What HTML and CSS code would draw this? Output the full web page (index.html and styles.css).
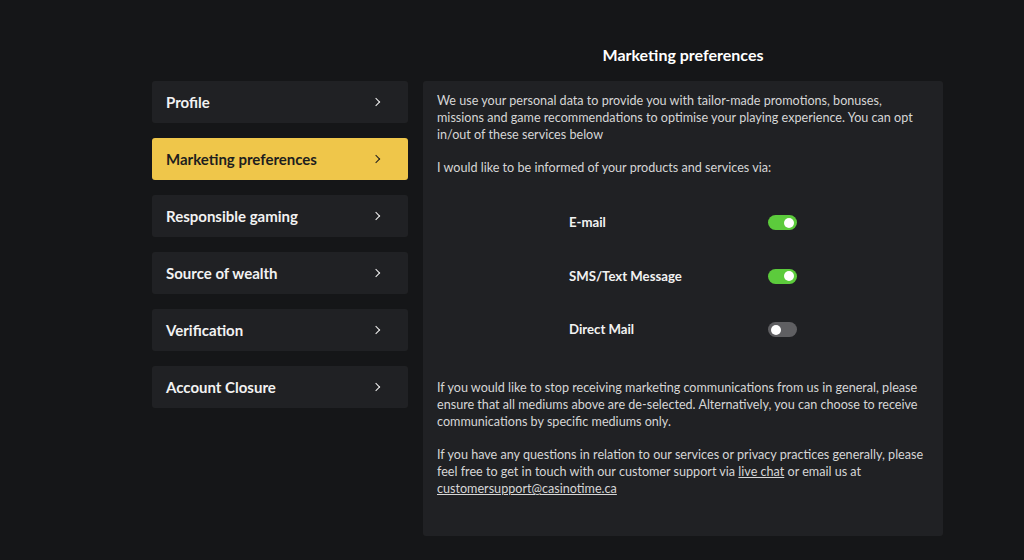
FILE: index.html
```html
<!DOCTYPE html>
<html lang="en">
<head>
    <meta charset="UTF-8">
    <meta name="viewport" content="width=device-width, initial-scale=1.0">
    <title>Account - Marketing preferences</title>
    <link rel="stylesheet" href="styles.css">
</head>
<body>

    <div class="page">
        <nav class="sidebar">
            <a class="menu-item" href="#">Profile <span class="chevron"></span></a>
            <a class="menu-item active" href="#">Marketing preferences <span class="chevron"></span></a>
            <a class="menu-item" href="#">Responsible gaming <span class="chevron"></span></a>
            <a class="menu-item" href="#">Source of wealth <span class="chevron"></span></a>
            <a class="menu-item" href="#">Verification <span class="chevron"></span></a>
            <a class="menu-item" href="#">Account Closure <span class="chevron"></span></a>
        </nav>

        <main class="content">
            <h1>Marketing preferences</h1>

            <div class="panel">
                <p>We use your personal data to provide you with tailor-made promotions, bonuses, missions and game recommendations to optimise your playing experience. You can opt in/out of these services below</p>
                <p>I would like to be informed of your products and services via:</p>

                <div class="options">
                    <label class="option">
                        <span>E-mail</span>
                        <input type="checkbox" checked>
                        <span class="switch"></span>
                    </label>
                    <label class="option">
                        <span>SMS/Text Message</span>
                        <input type="checkbox" checked>
                        <span class="switch"></span>
                    </label>
                    <label class="option">
                        <span>Direct Mail</span>
                        <input type="checkbox">
                        <span class="switch"></span>
                    </label>
                </div>

                <p>If you would like to stop receiving marketing communications from us in general, please ensure that all mediums above are de-selected. Alternatively, you can choose to receive communications by specific mediums only.</p>
                <p>If you have any questions in relation to our services or privacy practices generally, please feel free to get in touch with our customer support via <a href="#">live chat</a> or email us at <a href="#">customersupport@casinotime.ca</a></p>
            </div>
        </main>
    </div>

</body>
</html>
```

FILE: styles.css
```css
body {
    background-color: #151618;
    color: #E6E6E6;
    font-family: 'Lato', sans-serif;
    margin: 0;
    padding: 0;
}

.page {
    display: flex;
    gap: 15px;
    padding: 45px 0 0 152px;
}

/* left menu */
.sidebar {
    width: 256px;
    margin-top: 36px;
    display: flex;
    flex-direction: column;
    gap: 15px;
}

.menu-item {
    box-sizing: border-box;
    height: 42px;
    display: flex;
    align-items: center;
    justify-content: space-between;
    padding: 0 29px 1px 14px;
    background-color: #202124;
    border-radius: 3px;
    color: #F2F2F2;
    font-size: 15px;
    font-weight: bold;
    text-decoration: none;
}

.menu-item.active {
    background-color: #EFC64A;
    color: #1E1E1E;
}

.chevron {
    width: 5px;
    height: 5px;
    border-right: 1.5px solid currentColor;
    border-top: 1.5px solid currentColor;
    transform: rotate(45deg);
}

/* right panel */
.content {
    width: 520px;
}

h1 {
    text-align: center;
    font-size: 16px;
    font-weight: bold;
    margin: 0 0 16px;
    line-height: 20px;
    color: #FFFFFF;
}

.panel {
    background-color: #202124;
    border-radius: 3px;
    padding: 11px 14px 38px;
    min-height: 406px;
    font-size: 12.6px;
    line-height: 17px;
    color: #D6D6D6;
}

.panel p {
    margin: 0 0 16px;
}

.panel p:last-child {
    margin-bottom: 0;
}

.panel a {
    color: #D6D6D6;
    text-decoration: underline;
}

.options {
    width: 228px;
    margin: 38px auto 41px;
    display: flex;
    flex-direction: column;
    gap: 36.5px;
}

.option {
    display: flex;
    align-items: center;
    justify-content: space-between;
    height: 17px;
    font-size: 13.2px;
    font-weight: bold;
    color: #F2F2F2;
}

.option input {
    display: none;
}

.switch {
    position: relative;
    width: 29px;
    height: 15px;
    border-radius: 8px;
    background-color: #5F5F62;
}

.switch::after {
    content: "";
    position: absolute;
    top: 2.5px;
    left: 3px;
    width: 10px;
    height: 10px;
    border-radius: 50%;
    background-color: #FFFFFF;
}

.option input:checked + .switch {
    background-color: #5CCB3C;
}

.option input:checked + .switch::after {
    left: 16px;
}
```
